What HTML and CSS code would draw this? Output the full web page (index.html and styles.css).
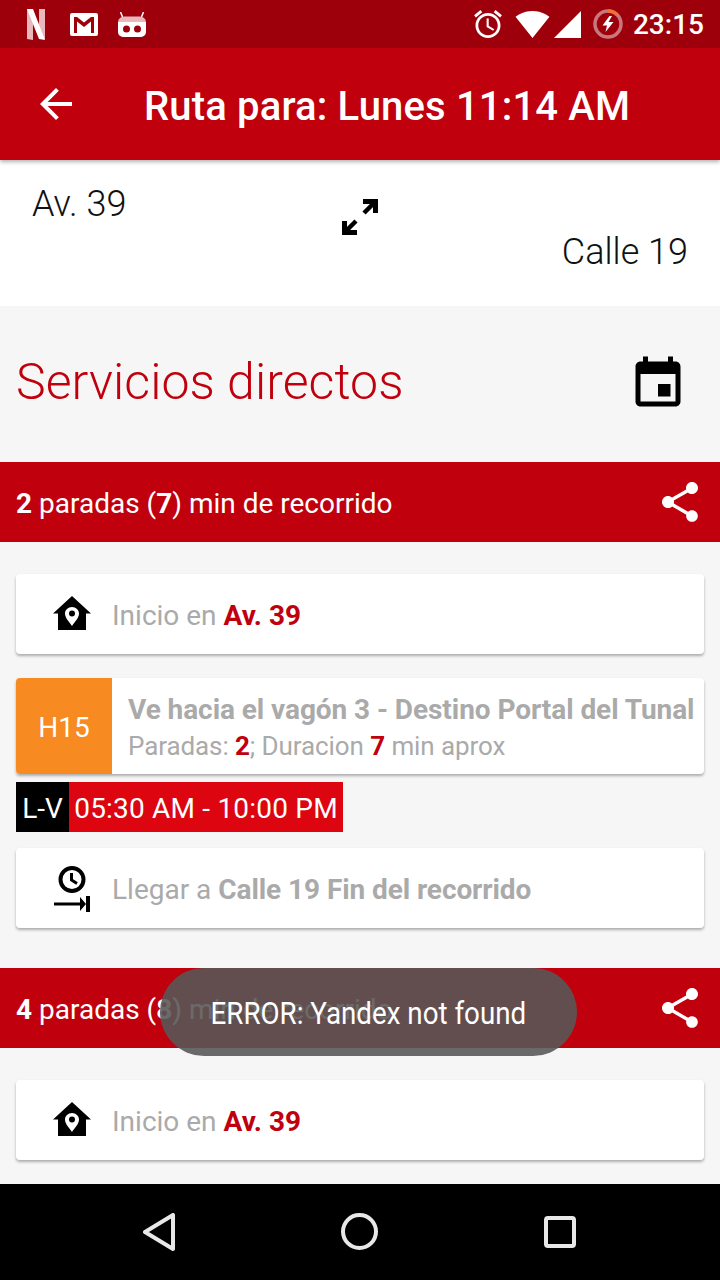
FILE: index.html
```html
<!DOCTYPE html>
<html lang="es">
<head>
    <meta charset="UTF-8">
    <meta name="viewport" content="width=device-width, initial-scale=1.0">
    <title>Ruta</title>
    <link rel="stylesheet" href="styles.css">
</head>
<body>
    <svg class="defs" width="0" height="0">
        <symbol id="share" viewBox="0 0 24 24"><path d="M18 16.08c-.76 0-1.44.3-1.96.77L8.91 12.7c.05-.23.09-.46.09-.7s-.04-.47-.09-.7l7.05-4.11c.54.5 1.25.81 2.04.81 1.66 0 3-1.34 3-3s-1.34-3-3-3-3 1.34-3 3c0 .24.04.47.09.7L8.04 9.81C7.5 9.31 6.79 9 6 9c-1.66 0-3 1.34-3 3s1.34 3 3 3c.79 0 1.5-.31 2.04-.81l7.12 4.16c-.05.21-.08.43-.08.65 0 1.61 1.31 2.92 2.92 2.92 1.61 0 2.92-1.31 2.92-2.92s-1.31-2.92-2.92-2.92z"/></symbol>
        <symbol id="home-pin" viewBox="0 0 40 40"><path fill-rule="evenodd" d="M20 2 39 19.500H34V36H6V19.500H1ZM20 13c-4 0-7 3-7 6.500 0 4.500 4.500 8.500 7 12.500 2.500-4 7-8 7-12.500C27 16 24 13 20 13ZM20 16.500a3 3 0 1 1 0 6 3 3 0 0 1 0-6Z"/></symbol>
    </svg>

    <div class="status-bar">
        <svg class="st-netflix" viewBox="0 0 18 31"><path fill="#e8b8bd" d="M0 0H6V31L0 30Z"/><path fill="#e8b8bd" d="M12 0H18V30L12 29Z"/><path fill="#fff" d="M0 0H6L18 31 12 30Z"/></svg>
        <svg class="st-gmail" viewBox="0 0 28 23"><path fill="#fff" fill-rule="evenodd" d="M2 0H26A2 2 0 0 1 28 2V21A2 2 0 0 1 26 23H2A2 2 0 0 1 0 21V2A2 2 0 0 1 2 0ZM4 4V20H7V8.500L14 14 21 8.500V20H24V4H21L14 9.500 7 4Z"/></svg>
        <svg class="st-robot" viewBox="0 0 28 25"><path fill="#e8b8bd" d="M0 10A6 6 0 0 1 6 4.500H22A6 6 0 0 1 28 10V11H0Z"/><path stroke="#fff" stroke-width="1.500" d="M2.500 0 4.500 5M25.500 0 23.500 5"/><path fill="#fff" fill-rule="evenodd" d="M0 10H28V20A5 5 0 0 1 23 25H5A5 5 0 0 1 0 20ZM8.500 13.500a3.500 3.500 0 1 0 0 7 3.500 3.500 0 0 0 0-7ZM19.500 13.500a3.500 3.500 0 1 0 0 7 3.500 3.500 0 0 0 0-7Z"/></svg>
        <div class="st-right">
            <svg class="st-alarm" viewBox="2 1.860 20 20.140"><path fill="#fff" d="M22 5.720l-4.600-3.860-1.290 1.530 4.600 3.860L22 5.720zM7.880 3.390L6.600 1.860 2 5.710l1.290 1.530 4.590-3.850zM12.500 8H11v6l4.750 2.850.75-1.230-4-2.370V8zM12 4c-4.970 0-9 4.030-9 9s4.030 9 9 9c4.970 0 9-4.030 9-9s-4.030-9-9-9zm0 16c-3.870 0-7-3.130-7-7s3.130-7 7-7 7 3.130 7 7-3.130 7-7 7z"/></svg>
            <svg class="st-wifi" viewBox="0.360 3 23.280 18.500"><path fill="#fff" d="M12.010 21.490L23.640 7c-.45-.34-4.930-4-11.640-4C5.280 3 .81 6.660.36 7l11.640 14.490.01.01.01-.01z"/></svg>
            <svg class="st-signal" viewBox="0 0 27 27"><path fill="#fff" d="M0 27H27V0Z"/></svg>
            <svg class="st-battery" viewBox="0 0 30 30">
                <circle cx="15" cy="15" r="13" fill="none" stroke="#c9777f" stroke-width="3.500"/>
                <path d="M15 2A13 13 0 0 1 24.200 5.800" fill="none" stroke="#f0703a" stroke-width="3.500"/>
                <path fill="#fff" d="M16.500 7 9.500 16.500H14L12.500 23 20.500 13H15.500L19 7Z"/>
            </svg>
            <span class="st-time">23:15</span>
        </div>
    </div>

    <header class="app-bar">
        <svg class="back-icon" viewBox="0 0 24 24"><path d="M20 11H7.830l5.590-5.590L12 4l-8 8 8 8 1.410-1.410L7.830 13H20v-2z"/></svg>
        <h1>Ruta para: Lunes 11:14 AM</h1>
    </header>

    <div class="route">
        <span class="route-from">Av. 39</span>
        <svg class="route-swap" viewBox="0 0 36 36">
            <path d="M21 0H36V14H31V5H21Z"/>
            <path d="M15 36H0V22H5V31H15Z"/>
            <path d="M32 4 22 14M4 32 14 22" fill="none" stroke="#000" stroke-width="4.500"/>
        </svg>
        <span class="route-to">Calle 19</span>
    </div>

    <main class="content">
        <div class="section-title">
            <h2>Servicios directos</h2>
            <svg class="event-icon" viewBox="0 0 24 24"><path d="M17 12h-5v5h5v-5zM16 1v2H8V1H6v2H5c-1.110 0-1.990.9-1.990 2L3 19c0 1.100.89 2 2 2h14c1.100 0 2-.9 2-2V5c0-1.100-.9-2-2-2h-1V1h-2zm3 18H5V8h14v11z"/></svg>
        </div>

        <div class="trip-head">
            <span class="trip-label"><b>2</b> paradas (<b>7</b>) min de recorrido</span>
            <svg class="share-icon"><use href="#share"/></svg>
        </div>
        <div class="trip-body">
            <div class="card card-row">
                <svg class="row-icon"><use href="#home-pin"/></svg>
                <span class="row-text">Inicio en <b class="red">Av. 39</b></span>
            </div>
            <div class="card bus-card">
                <div class="bus-code">H15</div>
                <div class="bus-info">
                    <div class="bus-dest"><b>Ve hacia el vagón 3 - Destino Portal del Tunal</b></div>
                    <div class="bus-meta">Paradas: <b class="red">2</b>; Duracion <b class="red">7</b> min aprox</div>
                </div>
            </div>
            <div class="schedule">
                <span class="sch-days">L-V</span>
                <span class="sch-hours">05:30 AM - 10:00 PM</span>
            </div>
            <div class="card card-row">
                <svg class="row-icon row-icon-tall" viewBox="0 0 40 48">
                    <circle cx="20" cy="15.500" r="11.500" fill="none" stroke="#000" stroke-width="4"/>
                    <path d="M19.500 9V16L25 19.500" fill="none" stroke="#000" stroke-width="3"/>
                    <path d="M2 38.500H28V33L34 40 28 47V41.500H2Z"/>
                    <path d="M34 32H38V48H34Z"/>
                </svg>
                <span class="row-text">Llegar a <b class="row-dest">Calle 19 Fin del recorrido</b></span>
            </div>
        </div>

        <div class="trip-head">
            <span class="trip-label"><b>4</b> paradas (<b>8</b>) min de recorrido</span>
            <svg class="share-icon"><use href="#share"/></svg>
        </div>
        <div class="trip-body">
            <div class="card card-row">
                <svg class="row-icon"><use href="#home-pin"/></svg>
                <span class="row-text">Inicio en <b class="red">Av. 39</b></span>
            </div>
        </div>
    </main>

    <div class="toast"><span class="toast-text">ERROR: Yandex not found</span></div>

    <nav class="nav-bar">
        <svg class="nav-back" viewBox="0 0 32 38"><path d="M30 2V36L2 19Z"/></svg>
        <svg class="nav-home" viewBox="0 0 37 37"><circle cx="18.500" cy="18.500" r="16.500"/></svg>
        <svg class="nav-recent" viewBox="0 0 32 32"><rect x="2" y="2" width="28" height="28" rx="2"/></svg>
    </nav>
</body>
</html>
```

FILE: styles.css
```css
* {
    box-sizing: border-box;
}

body {
    margin: 0;
    width: 720px;
    height: 1280px;
    overflow: hidden;
    display: flex;
    flex-direction: column;
    position: relative;
    background-color: #f6f6f6;
    font-family: Roboto, "Liberation Sans", sans-serif;
}

.defs {
    position: absolute;
}

svg {
    flex-shrink: 0;
    display: block;
}

b {
    font-weight: 700;
}

.red {
    color: #c0000d;
}

/* status bar */
.status-bar {
    height: 48px;
    flex-shrink: 0;
    display: flex;
    align-items: center;
    padding-left: 27px;
    padding-right: 16px;
    background-color: #9e000b;
}

.st-netflix {
    width: 18px;
    height: 31px;
}

.st-gmail {
    width: 28px;
    height: 23px;
    margin-left: 25px;
}

.st-robot {
    width: 28px;
    height: 25px;
    margin-left: 20px;
}

.st-right {
    margin-left: auto;
    display: flex;
    align-items: center;
}

.st-alarm {
    width: 28px;
    height: 28px;
}

.st-wifi {
    width: 35px;
    height: 27px;
    margin-left: 13px;
}

.st-signal {
    width: 27px;
    height: 27px;
    margin-left: 4px;
}

.st-battery {
    width: 30px;
    height: 30px;
    margin-left: 12px;
}

.st-time {
    margin-left: 10px;
    color: #fff;
    font-size: 28px;
    font-weight: 500;
}

/* app bar */
.app-bar {
    height: 112px;
    flex-shrink: 0;
    display: flex;
    align-items: center;
    padding-left: 32px;
    background-color: #c0000d;
    box-shadow: 0 2px 4px rgba(0, 0, 0, 0.3);
    position: relative;
}

.back-icon {
    width: 48px;
    height: 48px;
    fill: #fff;
}

.app-bar h1 {
    margin: 4px 0 0 64px;
    color: #fff;
    font-size: 40px;
    font-weight: 500;
    letter-spacing: 0.16px;
}

/* route from / to */
.route {
    height: 146px;
    flex-shrink: 0;
    display: grid;
    grid-template-columns: 1fr 36px 1fr;
    padding: 23px 32px 0;
    background-color: #fff;
    font-size: 36px;
    font-weight: 300;
    color: #111;
}

.route-swap {
    width: 36px;
    height: 36px;
    margin-top: 16px;
}

.route-to {
    text-align: right;
    margin-top: 48px;
}

/* list */
.content {
    flex: 1;
    min-height: 0;
    overflow: hidden;
}

.section-title {
    height: 156px;
    display: flex;
    align-items: center;
    justify-content: space-between;
    padding: 0 32px 0 16px;
}

.section-title h2 {
    margin: 0 0 4px;
    color: #c0000d;
    font-size: 50px;
    font-weight: 300;
    letter-spacing: 0.05px;
}

.event-icon {
    width: 60px;
    height: 60px;
}

.trip-head {
    height: 80px;
    display: flex;
    align-items: center;
    justify-content: space-between;
    padding: 0 16px;
    background-color: #c0000d;
    color: #fff;
    font-size: 28px;
}

.trip-label {
    margin-top: 2px;
}

.share-icon {
    width: 48px;
    height: 48px;
    fill: #fff;
}

.trip-body {
    padding: 32px 16px 16px;
}

.card {
    background-color: #fff;
    border-radius: 4px;
    box-shadow: 0 2px 3px rgba(0, 0, 0, 0.3);
}

.card-row {
    height: 80px;
    display: flex;
    align-items: center;
    padding-left: 36px;
    margin-bottom: 24px;
}

.row-icon {
    width: 40px;
    height: 40px;
    margin-right: 20px;
}

.row-icon-tall {
    height: 48px;
}

.row-text {
    margin-top: 2px;
    color: #aaa;
    font-size: 28px;
}

.row-dest {
    letter-spacing: -0.08px;
}

.bus-card {
    height: 96px;
    display: flex;
    overflow: hidden;
}

.bus-code {
    width: 96px;
    padding-top: 2px;
    display: flex;
    align-items: center;
    justify-content: center;
    background-color: #f78a21;
    color: #fff;
    font-size: 28px;
}

.bus-info {
    padding: 13px 0 0 16px;
    color: #aaa;
    white-space: nowrap;
}

.bus-dest {
    font-size: 28px;
    line-height: 37px;
    letter-spacing: -0.065px;
}

.bus-meta {
    font-size: 26px;
    line-height: 36px;
    letter-spacing: -0.09px;
}

.schedule {
    display: flex;
    height: 50px;
    margin: 8px 0 16px;
    color: #fff;
    font-size: 28px;
    line-height: 50px;
}

.sch-days {
    width: 53px;
    padding-top: 2px;
    text-align: center;
    background-color: #000;
}

.sch-hours {
    width: 274px;
    padding-top: 2px;
    text-align: center;
    letter-spacing: 0.2px;
    background-color: #dc0510;
}

/* toast */
.toast {
    position: absolute;
    left: 160px;
    top: 968px;
    width: 417px;
    height: 88px;
    display: flex;
    align-items: center;
    justify-content: center;
    border-radius: 44px;
    background-color: rgba(88, 88, 88, 0.89);
    color: #fff;
    font-size: 31px;
    white-space: nowrap;
}

.toast-text {
    margin-top: 2px;
    transform: scaleX(0.895);
}

/* nav bar */
.nav-bar {
    height: 96px;
    flex-shrink: 0;
    display: flex;
    align-items: center;
    padding-left: 143px;
    background-color: #000;
}

.nav-bar svg {
    fill: none;
    stroke: #e8e8e8;
    stroke-width: 4;
    stroke-linejoin: round;
}

.nav-back {
    width: 32px;
    height: 38px;
    margin-top: -1px;
}

.nav-home {
    width: 37px;
    height: 37px;
    margin-left: 166px;
    margin-top: -1px;
}

.nav-recent {
    width: 32px;
    height: 32px;
    margin-left: 166px;
}
```
